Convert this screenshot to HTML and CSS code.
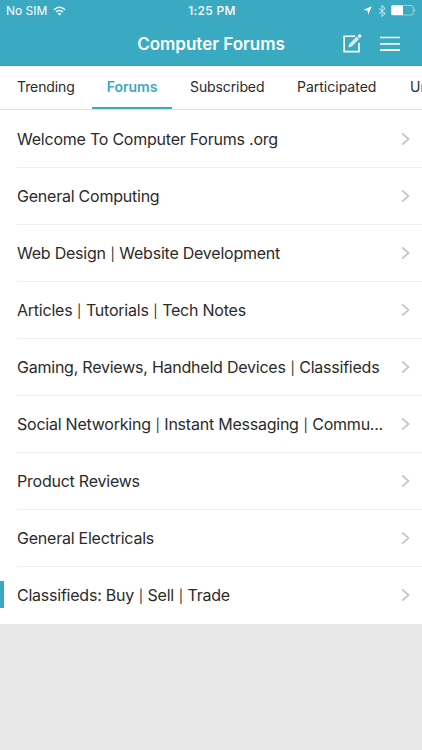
FILE: index.html
```html
<!DOCTYPE html>
<html lang="en">
<head>
<meta charset="utf-8">
<title>Computer Forums</title>
<link rel="stylesheet" href="styles.css">
</head>
<body>
<header class="header">
  <div class="status">
    <div class="carrier"><span>No SIM</span>
      <svg width="13" height="10" viewBox="0 0 14 10"><g fill="none" stroke="#fff" stroke-width="1.6"><path d="M1 3.6Q7-1.6 13 3.6"/><path d="M3.2 6Q7 2.8 10.8 6"/></g><path d="M4.9 7.6Q7 6 9.1 7.6L7 9.8Z" fill="#fff"/></svg>
    </div>
    <div class="time">1:25 PM</div>
    <div class="indicators">
      <svg class="location" width="9" height="9" viewBox="0 0 9 9"><path d="M8.8.2L5.2 8.8 4.6 4.5.2 4Z" fill="#fff"/></svg>
      <svg class="bluetooth" width="8" height="12" viewBox="0 0 8 12"><path d="M1 3.3L7 8.6 4 11.3V.7L7 3.4 1 8.7" fill="none" stroke="#fff" stroke-width="1.1"/></svg>
      <svg class="battery" width="25" height="11" viewBox="0 0 25 11"><rect x=".5" y=".5" width="21.5" height="9.5" rx="1" fill="none" stroke="#fff" stroke-opacity=".45"/><rect x=".5" y=".5" width="11.5" height="9.5" rx="1" fill="#fff"/><path d="M23 3.3q2.2 1.9 0 3.9z" fill="#fff" fill-opacity=".5"/></svg>
    </div>
  </div>
  <div class="titlebar">
    <h1>Computer Forums</h1>
    <div class="actions">
      <svg width="19" height="19" viewBox="0 0 19 19"><path d="M12.2 2.3H1.2V17.6H16V8.8" fill="none" stroke="#fff" stroke-width="1.6"/><path d="M5.4 13.4L6.4 9.9 13.6 2.8 15.9 5.1 8.8 12.3Z" fill="#fff"/><path d="M14.5 1.9L16 .5Q17 0 18 1T18.2 2.8L16.8 4.2Z" fill="#fff"/><path d="M7.2 11.3L14 4.6" stroke="#3aaac2" stroke-width=".6"/></svg>
      <svg width="20" height="16" viewBox="0 0 20 16"><path d="M0 1.5H20M0 7.8H20M0 14.1H20" stroke="#fff" stroke-width="1.7"/></svg>
    </div>
  </div>
</header>
<nav class="tabs">
  <a class="tab trending">Trending</a><a class="tab active">Forums</a><a class="tab subscribed">Subscribed</a><a class="tab participated">Participated</a><a class="tab unread">Unread</a>
</nav>
<main class="list">
  <div class="row"><span class="name">Welcome To Computer Forums .org</span><svg class="chevron" viewBox="0 0 9 14"><path d="M1.2 1.5L7.5 7 1.2 12.5"/></svg></div>
  <div class="row"><span class="name">General Computing</span><svg class="chevron" viewBox="0 0 9 14"><path d="M1.2 1.5L7.5 7 1.2 12.5"/></svg></div>
  <div class="row"><span class="name">Web Design <span class="pipe">|</span> Website Development</span><svg class="chevron" viewBox="0 0 9 14"><path d="M1.2 1.5L7.5 7 1.2 12.5"/></svg></div>
  <div class="row"><span class="name">Articles <span class="pipe">|</span> Tutorials <span class="pipe">|</span> Tech Notes</span><svg class="chevron" viewBox="0 0 9 14"><path d="M1.2 1.5L7.5 7 1.2 12.5"/></svg></div>
  <div class="row"><span class="name">Gaming, Reviews, Handheld Devices <span class="pipe">|</span> Classifieds</span><svg class="chevron" viewBox="0 0 9 14"><path d="M1.2 1.5L7.5 7 1.2 12.5"/></svg></div>
  <div class="row"><span class="name">Social Networking <span class="pipe">|</span> Instant Messaging <span class="pipe">|</span> Commu...</span><svg class="chevron" viewBox="0 0 9 14"><path d="M1.2 1.5L7.5 7 1.2 12.5"/></svg></div>
  <div class="row"><span class="name">Product Reviews</span><svg class="chevron" viewBox="0 0 9 14"><path d="M1.2 1.5L7.5 7 1.2 12.5"/></svg></div>
  <div class="row"><span class="name">General Electricals</span><svg class="chevron" viewBox="0 0 9 14"><path d="M1.2 1.5L7.5 7 1.2 12.5"/></svg></div>
  <div class="row marked"><span class="name">Classifieds: Buy <span class="pipe">|</span> Sell <span class="pipe">|</span> Trade</span><svg class="chevron" viewBox="0 0 9 14"><path d="M1.2 1.5L7.5 7 1.2 12.5"/></svg></div>
</main>
</body>
</html>
```
FILE: styles.css
```css
* { box-sizing: border-box; }
body { margin: 0; width: 422px; height: 750px; overflow: hidden; background: #e7e7e7; color: #2b2b2b; font-family: Inter, "Liberation Sans", sans-serif; }
svg { display: block; flex: none; }
.header { height: 66px; background: #3aaac2; color: #fff; border-bottom: 1px solid #329eb7; }
.status { height: 22px; display: grid; grid-template-columns: 1fr auto 1fr; align-items: center; padding: 0 6px 1px; font-size: 12px; }
.carrier, .indicators { display: flex; align-items: center; gap: 5px; }
.carrier { gap: 6px; }
.indicators { justify-content: flex-end; }
.location { margin-right: 1px; }
.bluetooth { opacity: .6; }
.time { font-weight: 500; letter-spacing: .35px; padding-left: 2px; }
.titlebar { height: 43px; display: grid; grid-template-columns: 1fr auto 1fr; align-items: center; padding: 0 22px; }
.titlebar h1 { grid-column: 2; margin: 0; font-size: 17px; font-weight: 600; }
.actions { display: flex; align-items: center; justify-content: flex-end; gap: 18px; }
.tabs { height: 44px; display: flex; background: #fff; border-bottom: 1px solid #dedede; padding-left: 17px; font-size: 14px; overflow: hidden; }
.tab { flex: none; line-height: 42px; white-space: nowrap; }
.trending { width: 75px; letter-spacing: -.1px; }
.active { width: 80px; text-align: center; color: #3aaac2; font-weight: 600; border-bottom: 2px solid #3aaac2; }
.subscribed { width: 108px; padding-left: 18px; letter-spacing: -.1px; }
.participated { width: 130px; padding-left: 17px; }
.list { background: #fff; height: 514px; padding-top: 1px; }
.row { height: 57px; margin-left: 17px; padding-right: 12px; display: flex; align-items: center; justify-content: space-between; border-bottom: 1px solid #f0f0f0; position: relative; font-size: 16px; }
.row:last-child { border-bottom-color: #fff; }
.name { white-space: nowrap; letter-spacing: -.23px; }
.pipe { display: inline-block; width: 5px; font-size: 13px; line-height: 1; text-align: center; }
.chevron { width: 9px; height: 14px; fill: none; stroke: #c8c8c8; stroke-width: 1.8; }
.marked::before { content: ""; position: absolute; left: -17px; top: 14px; width: 4px; height: 27px; background: #3aaac2; }
```
